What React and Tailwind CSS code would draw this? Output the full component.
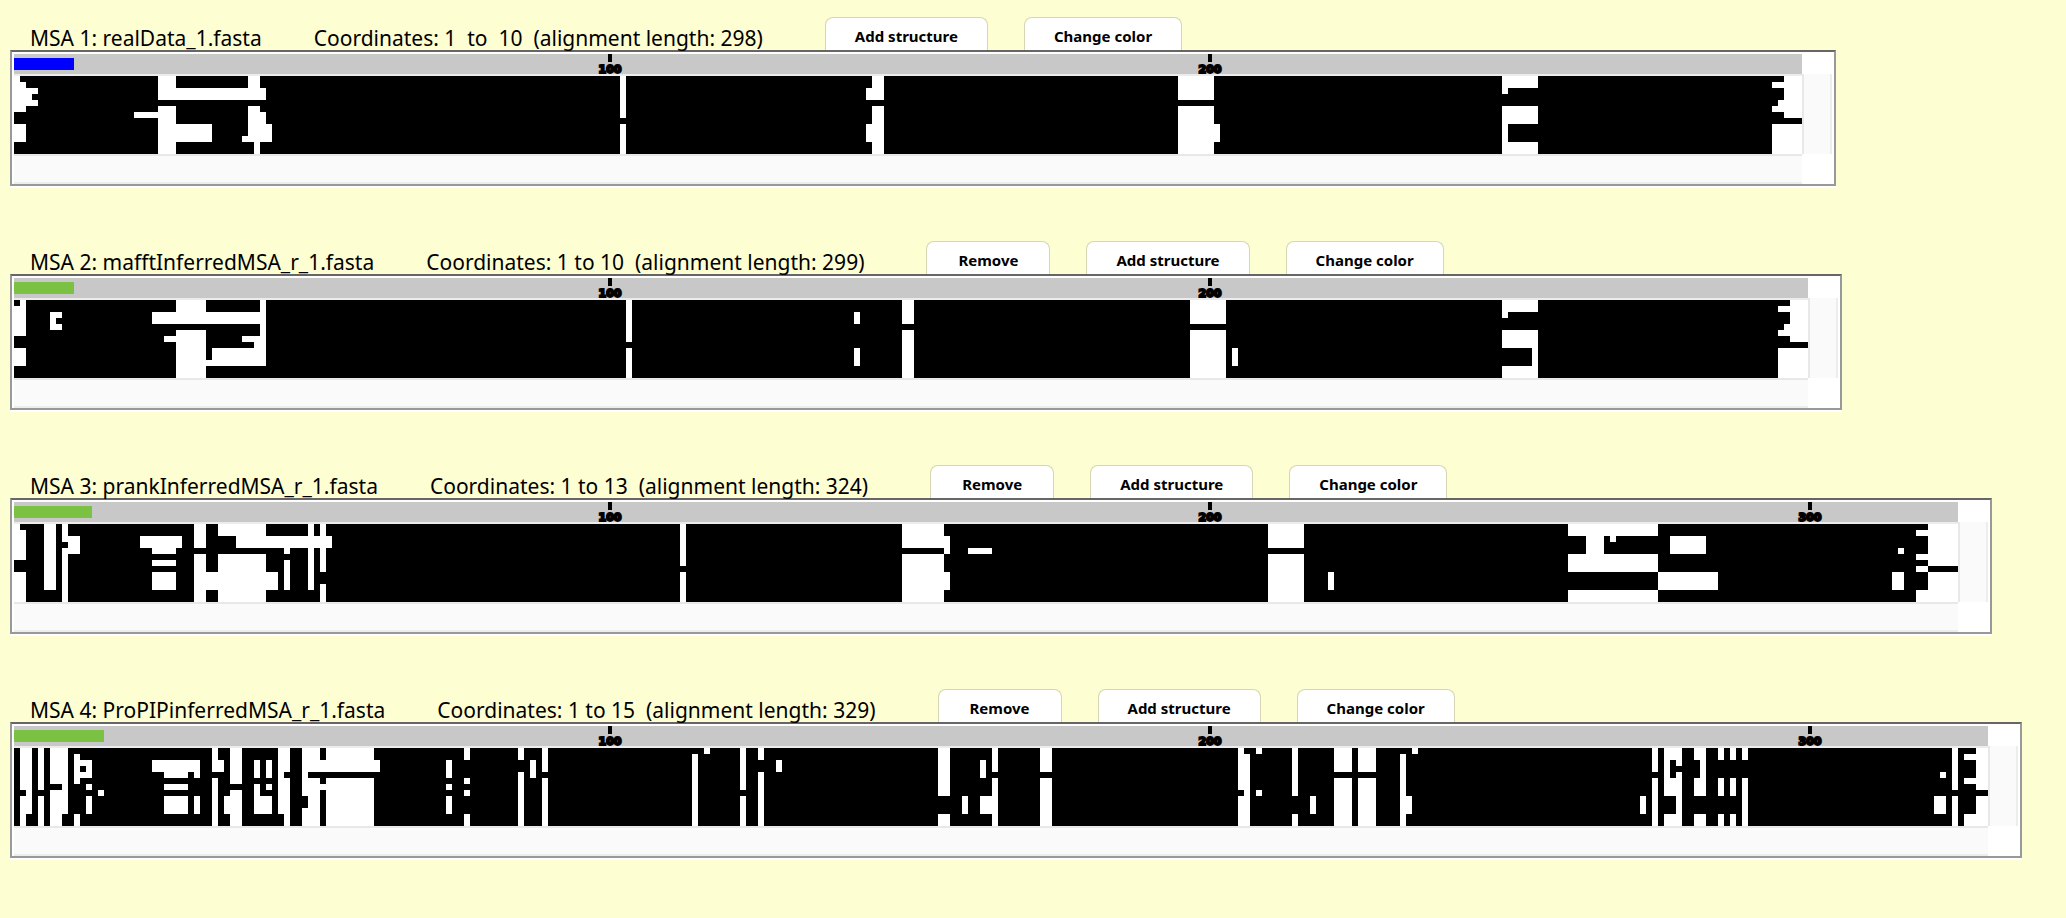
import React from "react";

const CELL = 6;
const ROWS = 13;

// Gap runs per alignment, written as "firstColumn-endColumn:rowRanges".
const alignments = [
  {
    title: "MSA 1: realData_1.fasta",
    coordinates: "Coordinates: 1  to  10  (alignment length: 298)",
    length: 298,
    visible: 10,
    reference: true,
    gaps: `0-1:0 0-2:1-5,8-10 2-3:3 2-4:2,4 20-24:6 24-27:0-3,5-12 27-39:2-3 27-33:8-10
      39-41:0-3,5-7 41-42:2-3,6-10 40-41:8-12 38-40:10 39-40:8-9 42-43:8-10
      101-102:0-6,8-12 142-143:2-3,8-10 143-145:0-3,5-12 194-200:0-3,5-12 200-201:8-10
      248-254:0-1,5-7,11-12 248-249:2,8-10
      295-298:0-6,8-12 293-295:1,5,8-12 294-295:4`,
  },
  {
    title: "MSA 2: mafftInferredMSA_r_1.fasta",
    coordinates: "Coordinates: 1 to 10  (alignment length: 299)",
    length: 299,
    visible: 10,
    gaps: `1-2:0 0-2:1-5,8-10 6-7:2-4 7-8:2,4 27-32:0-3,5-12 41-42:0-10 23-27:2-3 32-41:2-3
      25-27:6 38-41:6 40-41:7 33-41:8-10 32-33:10
      102-103:0-6,8-12 140-141:2-3,8-10 148-150:0-3,5-12 196-202:0-3,5-12 203-204:8-10
      248-254:0-1,5-7,11-12 248-249:2 253-254:8-10
      296-299:0-6,8-12 294-296:1,5,8-12 295-296:4`,
  },
  {
    title: "MSA 3: prankInferredMSA_r_1.fasta",
    coordinates: "Coordinates: 1 to 13  (alignment length: 324)",
    length: 324,
    visible: 13,
    gaps: `0-1:0 0-2:1-5,8-12 5-7:0-10 8-9:0-2,4-12 9-11:2-4 21-28:2-3 23-27:4,6,8-10
      30-32:0-3,5-12 32-34:8-10 34-42:0-1,5-12 37-53:2-3 42-44:8-10 45-46:4,6-10
      49-50:0-10 51-52:0-7,10-12
      111-112:0-6,8-12 148-155:0-3,5-12 155-156:2-4,8-10 159-163:4
      209-215:0-3,5-12 219-220:8-10
      259-274:0-1,5-7,11-12 262-265:2-4 266-267:2 274-284:8-10 276-282:2-4
      314-315:4 313-315:8-10 319-324:0-6,8-12 317-319:1,5,7,11-12`,
  },
  {
    title: "MSA 4: ProPIPinferredMSA_r_1.fasta",
    coordinates: "Coordinates: 1 to 15  (alignment length: 329)",
    length: 329,
    visible: 15,
    gaps: `1-2:0-6,8-12 2-3:0-10 4-5:0-6,8-12 6-8:0-5,7-12 8-9:0-10 10-11:1-5,11-12
      11-12:2,4 12-13:2-4,6,8-10 14-15:7 23-25:2-3 25-29:2-4,6,8-10 29-30:2-3 30-31:2-4,8-10
      33-34:0-3,5-12 34-35:2-3 35-36:8-10 36-38:0-5,7-12
      40-41:2-4,6-10 41-42:8-10 42-43:2-4,6,8-10 44-45:0-10 45-46:0-3,5-12
      48-49:0-7,10-12 49-51:0-3,5-12 51-52:2-3,6 52-60:0-3,5-12 60-61:2-3
      72-73:2-4,6,8-10 75-76:0-1,5,7,11-12 84-85:0-1,4-12 86-87:2-4 88-89:0-3,5-12
      113-114:1-12 115-116:0 121-122:0-6,8-12 124-125:0-1,4-12 127-128:2-3
      154-156:0-7,11-12 158-159:8-10 161-162:2-4,8-10 162-163:8-10 163-164:0-3,5-12
      171-173:0-3,5-12 204-205:0-6,8-12 205-206:1-12 207-208:0,7 213-214:0-7,11-12
      216-217:8-10 220-223:0-3,5-12 224-227:0-3,5-12 231-232:1-12 232-233:8-10 233-234:0
      271-272:8-10 273-274:0-3,5-12 275-276:0-7,11-12 276-277:0-1,5-7,11-12
      277-278:0-2,4-12 280-281:0-1,5-7,11-12 281-282:0-7,11-12
      284-285:0-1,5-7,11-12 286-287:0-1,5-7,11-12 288-289:0-1,5-12
      320-321:8-10 321-322:4,8-10 323-324:0-6,8-12 325-327:1,5,11-12 327-329:0-6,8-12`,
  },
];

function parseGaps(text) {
  return text
    .trim()
    .split(/\s+/)
    .flatMap((token) => {
      const [columns, rows] = token.split(":");
      const [start, end] = columns.split("-").map(Number);
      return rows.split(",").map((range) => {
        const [top, bottom = top] = range.split("-").map(Number);
        return { x: start, y: top, width: end - start, height: bottom - top + 1 };
      });
    });
}

function GapMap({ length, gaps, label }) {
  return (
    <svg
      role="img"
      aria-label={label}
      className="block bg-black"
      width={length * CELL}
      height={ROWS * CELL}
      viewBox={`0 0 ${length} ${ROWS}`}
      shapeRendering="crispEdges"
    >
      {parseGaps(gaps).map((gap, i) => (
        <rect key={i} {...gap} fill="#fff" />
      ))}
    </svg>
  );
}

function Ruler({ length, visible, reference }) {
  const marks = [];
  for (let m = 100; m <= length; m += 100) marks.push(m);
  return (
    <div className="relative h-5 bg-[#c8c8c8] py-1">
      <div
        className={reference ? "h-3 bg-[#0000ff]" : "h-3 bg-[#7bc143]"}
        style={{ width: visible * CELL }}
      />
      {marks.map((m) => (
        <div
          key={m}
          className="absolute top-0 flex w-6 flex-col items-center gap-[3px]"
          style={{ left: (m - 1) * CELL - 10 }}
        >
          <span className="h-2 w-1 bg-black" />
          <span className="font-['DejaVu_Sans',sans-serif] text-[11px] leading-[10px] font-bold text-black [-webkit-text-stroke:2px_black]">
            {m}
          </span>
        </div>
      ))}
    </div>
  );
}

function TabButton({ children }) {
  return (
    <button
      type="button"
      className="h-[33px] min-w-[124px] rounded-t-lg border border-b-0 border-[#d6d6b4] bg-white px-[29px] pt-1 font-['Noto_Sans',sans-serif] text-[15px] leading-5 font-bold whitespace-nowrap text-black"
    >
      {children}
    </button>
  );
}

function Alignment({ item }) {
  return (
    <section>
      <header className="flex items-end pl-5">
        <h2 className="mr-[52px] font-['Noto_Sans',sans-serif] text-[21px] leading-6 whitespace-pre">{item.title}</h2>
        <p className="mr-[62px] font-['Noto_Sans',sans-serif] text-[21px] leading-6 whitespace-pre">{item.coordinates}</p>
        <div className="flex gap-9">
          {!item.reference && <TabButton>Remove</TabButton>}
          <TabButton>Add structure</TabButton>
          <TabButton>Change color</TabButton>
        </div>
      </header>
      <div className="w-fit border-b-2 border-white">
        <div className="flex border-2 border-[#999] border-t-[#666] bg-white px-0.5 pt-0.5">
          <div>
            <Ruler length={item.length} visible={item.visible} reference={item.reference} />
            <div className="h-0.5 bg-[#ececec]" />
            <GapMap length={item.length} gaps={item.gaps} label={item.title} />
            <div className="h-[30px] border-y-2 border-t-[#e8e8e8] border-b-[#ededed] bg-[#fafafa]" />
          </div>
          <div className="mt-5 mb-[30px] w-[30px] border-x-2 border-l-[#e8e8e8] border-r-[#ededed] bg-[#fafafa]" />
        </div>
      </div>
    </section>
  );
}

export default function App() {
  return (
    <main className="flex min-h-screen flex-col gap-[53px] bg-[#fefed3] pt-[17px] pb-10 pl-2.5 text-black">
      {alignments.map((item) => (
        <Alignment key={item.title} item={item} />
      ))}
    </main>
  );
}
